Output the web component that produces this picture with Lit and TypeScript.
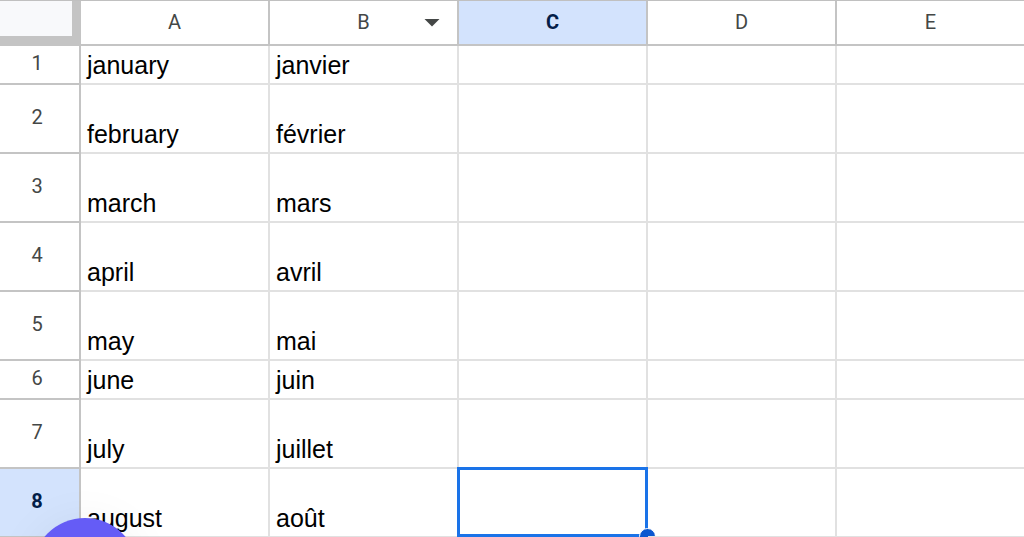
import { LitElement, html, css, nothing } from "lit";
import { customElement, state } from "lit/decorators.js";
import { classMap } from "lit/directives/class-map.js";

interface Row {
  tall: boolean;
  cells: string[];
}

const COLUMNS = ["A", "B", "C", "D", "E"];

const ROWS: Row[] = [
  { tall: false, cells: ["january", "janvier"] },
  { tall: true, cells: ["february", "février"] },
  { tall: true, cells: ["march", "mars"] },
  { tall: true, cells: ["april", "avril"] },
  { tall: true, cells: ["may", "mai"] },
  { tall: false, cells: ["june", "juin"] },
  { tall: true, cells: ["july", "juillet"] },
  { tall: true, cells: ["august", "août"] },
];

@customElement("app-root")
export class AppRoot extends LitElement {
  static styles = css`
    :host {
      display: block;
      position: relative;
      height: 100vh;
      overflow: hidden;
      background: #fff;
      font-family: "Liberation Sans", Arial, sans-serif;
    }
    .sheet {
      width: max-content;
      min-width: 100%;
      table-layout: fixed;
      border-collapse: separate;
      border-spacing: 0;
      border-top: 1px solid #c0c0c0;
    }
    .row-col {
      width: 81px;
    }
    .data-col {
      width: 189px;
    }
    th,
    td {
      box-sizing: border-box;
      padding: 0;
    }
    .corner,
    .col-head,
    .row-head {
      border: 0 solid #c4c4c4;
      border-right-width: 2px;
      border-bottom-width: 2px;
      color: #444746;
      font: 400 20px/24px Roboto, sans-serif;
      text-align: center;
    }
    .corner,
    .col-head {
      height: 45px;
    }
    .corner {
      background: #c4c4c4;
      vertical-align: top;
    }
    .select-all {
      display: block;
      width: 72px;
      height: 35px;
      padding: 0;
      border: 0;
      background: #f8f9fb;
    }
    .col-head {
      position: relative;
      padding-bottom: 2px;
    }
    .row-head {
      padding: 0 5px 3px 0;
    }
    .active {
      background: #d3e3fd;
      color: #041e49;
      font-weight: 700;
    }
    .menu {
      position: absolute;
      top: 10px;
      right: 13px;
      display: flex;
      align-items: center;
      justify-content: center;
      width: 24px;
      height: 24px;
      padding: 0;
      border: 0;
      background: none;
      color: #444746;
    }
    .cell {
      position: relative;
      height: 39px;
      padding: 0 6px 4px;
      border: 0 solid #e1e1e1;
      border-right-width: 2px;
      border-bottom-width: 2px;
      color: #000;
      font-size: 25px;
      line-height: 28px;
      vertical-align: bottom;
      white-space: nowrap;
    }
    .tall .cell {
      height: 69px;
    }
    .selection {
      position: absolute;
      inset: -2px -2px -1px;
      border: 3px solid #1a73e8;
    }
    .handle {
      position: absolute;
      right: -11px;
      bottom: -11px;
      width: 15px;
      height: 15px;
      border: 1px solid #fff;
      border-radius: 50%;
      background: #0b57d0;
    }
    .launcher {
      position: absolute;
      left: 32px;
      bottom: -87px;
      width: 106px;
      height: 106px;
      padding: 0;
      border: 0;
      border-radius: 50%;
      background: #655cf6;
      box-shadow: 0 4px 48px rgba(0, 0, 0, 0.06);
    }
  `;

  @state() private selected = { row: 7, col: 2 };

  private renderCell(row: number, col: number) {
    const isSelected = this.selected.row === row && this.selected.col === col;
    return html`<td class="cell" @click=${() => (this.selected = { row, col })}>${ROWS[row].cells[col] ?? ""}${isSelected
        ? html`<div class="selection"><span class="handle"></span></div>`
        : nothing}</td>`;
  }

  render() {
    return html`
      <table class="sheet">
        <colgroup>
          <col class="row-col" />
          ${COLUMNS.map(() => html`<col class="data-col" />`)}
        </colgroup>
        <thead>
          <tr>
            <td class="corner"><button class="select-all" aria-label="Select all"></button></td>
            ${COLUMNS.map(
              (name, col) => html`<th
                scope="col"
                class=${classMap({ "col-head": true, active: col === this.selected.col })}
              >${name}${name === "B"
                  ? html`<button class="menu" aria-label="Column B menu">
                      <svg width="16" height="8" viewBox="0 0 16 8" aria-hidden="true">
                        <path d="M.5 0h15L8 7.6z" fill="currentColor" />
                      </svg>
                    </button>`
                  : nothing}</th>`
            )}
          </tr>
        </thead>
        <tbody>
          ${ROWS.map(
            (row, r) => html`<tr class=${classMap({ tall: row.tall })}>
              <th
                scope="row"
                class=${classMap({ "row-head": true, active: r === this.selected.row })}
              >${r + 1}</th>
              ${COLUMNS.map((_, c) => this.renderCell(r, c))}
            </tr>`
          )}
        </tbody>
      </table>
      <button class="launcher" aria-label="Open assistant"></button>
    `;
  }
}
